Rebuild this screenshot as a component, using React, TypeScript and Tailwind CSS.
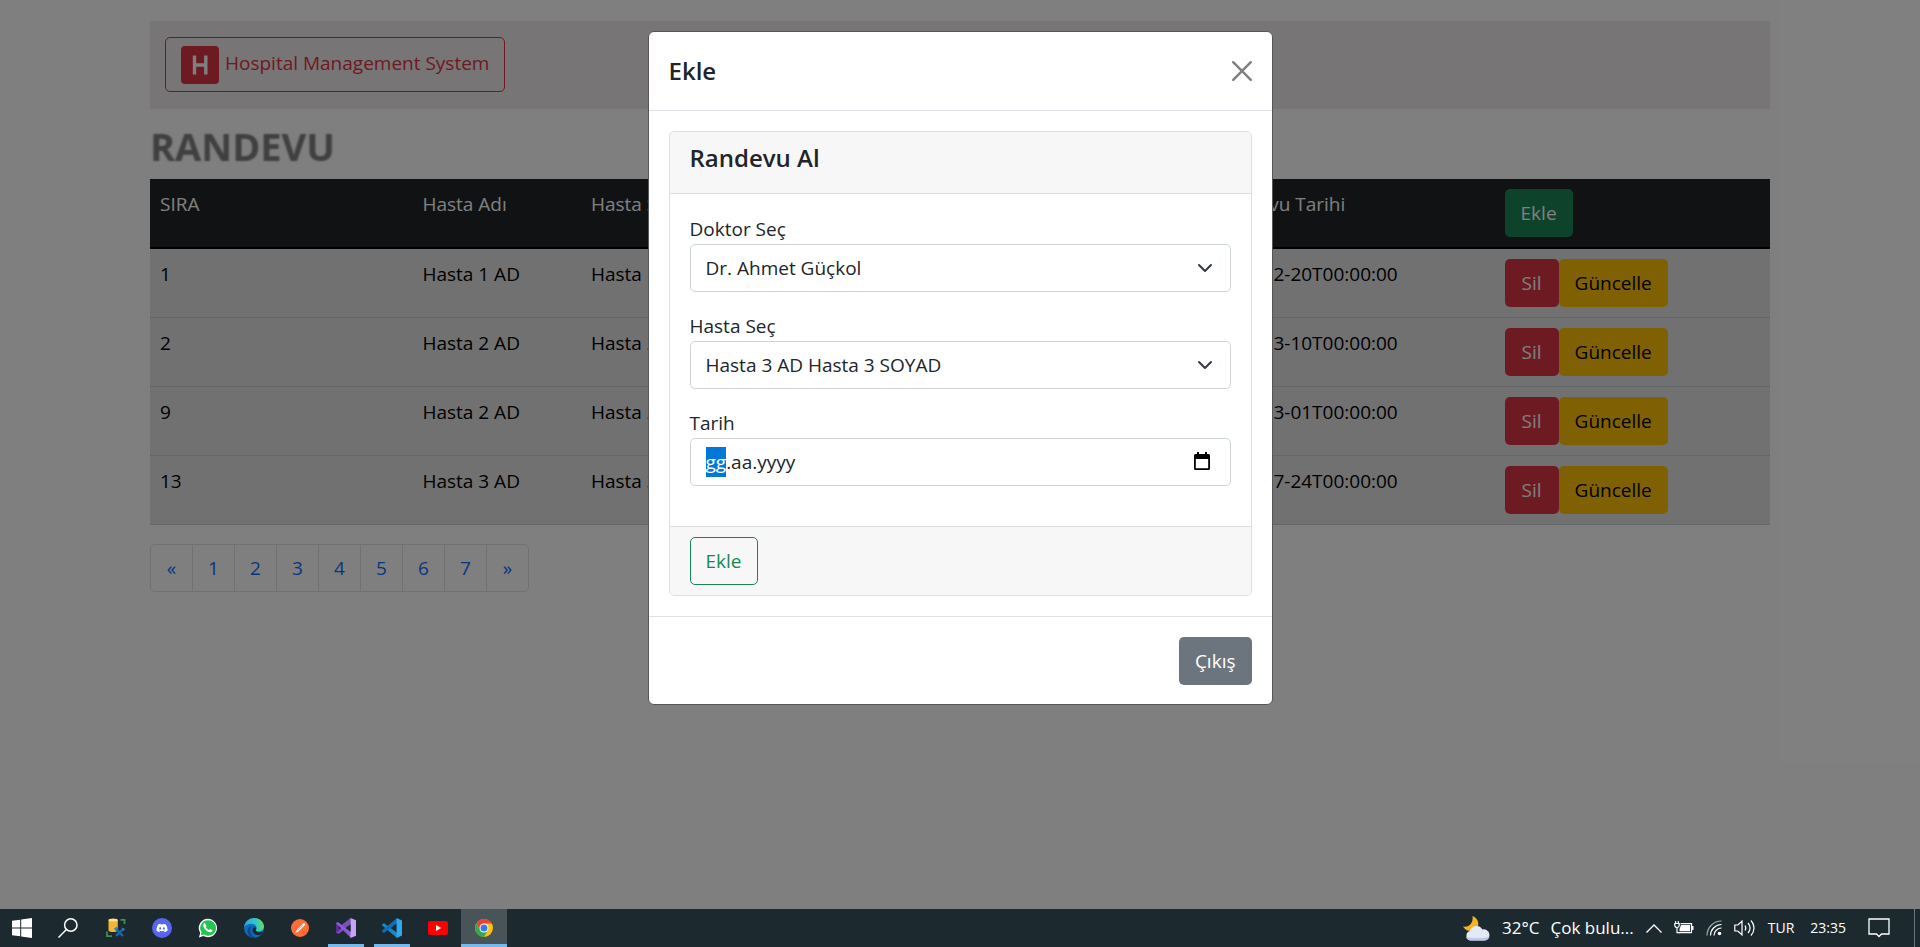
import { useEffect, useRef, useState } from "react";
import type { ReactNode } from "react";
import { FaDiscord } from "react-icons/fa";

type Appointment = { id: number; name: string; surname: string; doctor: string; date: string };

const appointments: Appointment[] = [
  { id: 1, name: "Hasta 1 AD", surname: "Hasta 1 SOYAD", doctor: "Dr. Ahmet Güçkol", date: "2022-02-20T00:00:00" },
  { id: 2, name: "Hasta 2 AD", surname: "Hasta 2 SOYAD", doctor: "Dr. Ahmet Güçkol", date: "2022-03-10T00:00:00" },
  { id: 9, name: "Hasta 2 AD", surname: "Hasta 2 SOYAD", doctor: "Dr. Ahmet Güçkol", date: "2022-03-01T00:00:00" },
  { id: 13, name: "Hasta 3 AD", surname: "Hasta 3 SOYAD", doctor: "Dr. Ahmet Güçkol", date: "2022-07-24T00:00:00" },
];

const pages = ["«", "1", "2", "3", "4", "5", "6", "7", "»"];

function Navbar() {
  return (
    <nav className="flex bg-[#f0eaec] px-[15px] pt-4 pb-[17px]">
      <a
        href="#"
        className="flex h-[55px] items-center gap-[6px] rounded-[5px] border border-[#dc3545] px-[15px] text-[#dc3545]"
      >
        <svg viewBox="0 0 38 38" className="size-[38px]" aria-hidden="true">
          <rect width="38" height="38" rx="4" fill="#dc3545" />
          <path d="M13.500 9.500v19M24.800 9.500v19M13.500 19h11.300" stroke="#fff" strokeWidth="3.400" fill="none" />
        </svg>
        <span className="-mt-1">Hospital Management System</span>
      </a>
    </nav>
  );
}

function AppointmentTable() {
  return (
    <table className="w-full table-fixed text-left">
      <colgroup>
        <col className="w-[16.2%]" />
        <col className="w-[10.4%]" />
        <col className="w-[14.6%]" />
        <col className="w-[23.8%]" />
        <col className="w-[18%]" />
        <col />
      </colgroup>
      <thead className="border-b-2 border-black bg-[#212529] text-white">
        <tr className="align-top">
          {["SIRA", "Hasta Adı", "Hasta Soyadı", "Doktor", "Randevu Tarihi"].map((title) => (
            <th key={title} className="p-[10px] font-normal">
              {title}
            </th>
          ))}
          <th className="p-[10px] font-normal">
            <button type="button" className="block h-12 rounded-[5px] bg-[#198754] px-4 text-white">
              Ekle
            </button>
          </th>
        </tr>
      </thead>
      <tbody className="bg-[#e2e3e5] text-black">
        {appointments.map((row) => (
          <tr key={row.id} className="border-b border-[#cbccce] align-top">
            <td className="p-[10px]">{row.id}</td>
            <td className="p-[10px]">{row.name}</td>
            <td className="p-[10px]">{row.surname}</td>
            <td className="p-[10px]">{row.doctor}</td>
            <td className="p-[10px]">{row.date}</td>
            <td className="p-[10px]">
              <div className="flex">
                <button type="button" className="h-12 rounded-[5px] bg-[#dc3545] px-[17px] text-white">
                  Sil
                </button>
                <button type="button" className="h-12 rounded-[5px] bg-[#ffc107] px-4 text-black">
                  Güncelle
                </button>
              </div>
            </td>
          </tr>
        ))}
      </tbody>
    </table>
  );
}

function Pagination() {
  return (
    <ul className="mt-[19px] flex w-fit overflow-hidden rounded-[5px] border border-[#dee2e6] bg-white">
      {pages.map((page, index) => (
        <li key={page} className={index > 0 ? "border-l border-[#dee2e6]" : ""}>
          <a href="#" className="flex h-[46px] w-[41px] items-center justify-center text-[#0d6efd]">
            {page}
          </a>
        </li>
      ))}
    </ul>
  );
}

function SelectField({ id, label, options }: { id: string; label: string; options: string[] }) {
  return (
    <div>
      <label htmlFor={id} className="block">
        {label}
      </label>
      <div className="relative">
        <select
          id={id}
          className="block h-12 w-full appearance-none rounded-[5px] border border-[#ced4da] bg-white px-[15px] outline-none"
        >
          {options.map((option) => (
            <option key={option}>{option}</option>
          ))}
        </select>
        <svg viewBox="0 0 16 16" className="pointer-events-none absolute top-4 right-[18px] size-4" aria-hidden="true">
          <path d="m2 5 6 6 6-6" fill="none" stroke="#343a40" strokeWidth="2" strokeLinecap="round" strokeLinejoin="round" />
        </svg>
      </div>
    </div>
  );
}

function DateField() {
  const ref = useRef<HTMLInputElement>(null);
  const [value, setValue] = useState("gg.aa.yyyy");

  useEffect(() => {
    ref.current?.focus({ preventScroll: true });
    ref.current?.setSelectionRange(0, 2);
  }, []);

  return (
    <div>
      <label htmlFor="date" className="block">
        Tarih
      </label>
      <div className="flex h-12 items-center rounded-[5px] border border-[#ced4da] bg-white px-[15px]">
        <input
          ref={ref}
          id="date"
          type="text"
          value={value}
          onChange={(event) => setValue(event.target.value)}
          className="min-w-0 flex-1 outline-none selection:bg-[#0078d7] selection:text-white"
        />
        <button type="button" aria-label="Takvim" className="mr-1">
          <svg viewBox="0 0 18 20" className="h-5 w-[18px]" aria-hidden="true">
            <path
              d="M4 0h2v2h6V0h2v2h1.500a1.500 1.500 0 0 1 1.500 1.500V16.500a1.500 1.500 0 0 1-1.500 1.500H2.500A1.500 1.500 0 0 1 1 16.500V3.500A1.500 1.500 0 0 1 2.500 2H4zM2.800 7v9.200h12.400V7z"
              fill="#000"
              fillRule="evenodd"
            />
          </svg>
        </button>
      </div>
    </div>
  );
}

function Modal() {
  return (
    <div
      role="dialog"
      aria-modal="true"
      aria-labelledby="modal-title"
      className="mx-auto mt-[31px] w-full max-w-[625px] rounded-[6px] border border-[#565656] bg-white text-[#212529]"
    >
      <header className="flex items-center justify-between border-b border-[#dee2e6] px-5 py-5">
        <h5 id="modal-title" className="text-2xl leading-[38px] font-semibold">
          Ekle
        </h5>
        <button type="button" aria-label="Kapat">
          <svg viewBox="0 0 20 20" className="size-5" aria-hidden="true">
            <path d="m1.200 1.200 17.600 17.600M18.800 1.200 1.200 18.800" stroke="#7f7f7f" strokeWidth="2.400" strokeLinecap="round" />
          </svg>
        </button>
      </header>

      <div className="p-5">
        <section className="overflow-hidden rounded-[5px] border border-[#dfdfdf]">
          <div className="border-b border-[#dfdfdf] bg-[#f7f7f7] px-5 pt-[10px] pb-5">
            <h5 className="text-2xl leading-[31px] font-semibold">Randevu Al</h5>
          </div>
          <div className="flex flex-col gap-[19px] px-5 pt-5 pb-10">
            <SelectField id="doctor" label="Doktor Seç" options={["Dr. Ahmet Güçkol"]} />
            <SelectField id="patient" label="Hasta Seç" options={["Hasta 3 AD Hasta 3 SOYAD"]} />
            <DateField />
          </div>
          <div className="border-t border-[#dfdfdf] bg-[#f7f7f7] px-5 py-[10px]">
            <button type="button" className="block h-12 rounded-[5px] border border-[#198754] px-[15px] text-[#198754]">
              Ekle
            </button>
          </div>
        </section>
      </div>

      <footer className="flex justify-end border-t border-[#dee2e6] p-5 pb-[19px]">
        <button type="button" className="h-12 rounded-[5px] bg-[#6c757d] px-4 text-white">
          Çıkış
        </button>
      </footer>
    </div>
  );
}

function WindowsIcon() {
  return (
    <svg viewBox="0 0 20 20" className="size-5" fill="#fff" aria-hidden="true">
      <path d="M0 2.800 8.200 1.700v7.800H0zM9.200 1.500 20 0v9.500H9.200zM0 10.500h8.200v7.800L0 17.200zM9.200 10.500H20V20L9.200 18.500z" />
    </svg>
  );
}

function SearchIcon() {
  return (
    <svg viewBox="0 0 20 20" className="size-5" fill="none" stroke="#fff" strokeWidth="1.500" aria-hidden="true">
      <circle cx="12.800" cy="7" r="6.200" />
      <path d="M8.400 11.400.5 19.500" />
    </svg>
  );
}

function SqlStudioIcon() {
  return (
    <svg viewBox="0 0 20 20" className="size-5" aria-hidden="true">
      <path d="M2.500 1.800v10.400c0 1 2 1.800 4.600 1.800s4.700-.8 4.700-1.800V1.800z" fill="#f2b632" />
      <ellipse cx="7.150" cy="2" rx="4.650" ry="1.600" fill="#ffe08a" />
      <path d="M14.500 1.800h4V6M1 13.500v4.700h5" fill="none" stroke="#3f8f4f" strokeWidth="1.800" />
      <path d="m9.500 10.500 7.500 7.500M17.500 10.500l-7.500 7.500" stroke="#1769aa" strokeWidth="2.200" />
      <path d="m8 10.500 3-2 1 2.500-2.500 1.500zM15.500 9.500l3.500 1.500-1.500 2z" fill="#2b83c6" />
    </svg>
  );
}

function DiscordIcon() {
  return (
    <span className="flex size-5 items-center justify-center rounded-full bg-[#5865f2]">
      <FaDiscord className="size-3 text-white" />
    </span>
  );
}

function WhatsAppIcon() {
  return (
    <svg viewBox="0 0 20 20" className="size-5" aria-hidden="true">
      <path d="M10 .8A9.200 9.200 0 0 0 2.200 14.900L.9 19.400l4.600-1.300A9.200 9.200 0 1 0 10 .8z" fill="#fff" />
      <path d="M10 2.200a7.800 7.800 0 0 0-6.500 12.100l-.7 3 3.100-.8A7.800 7.800 0 1 0 10 2.200z" fill="#25c351" />
      <path
        d="M7.200 5.600c-.4-.8-1.700 0-1.900 1.200-.5 3.200 4.200 7.700 7.200 7.400 1.300-.1 2.500-1.300 1.900-2l-1.900-1.100c-.6-.2-1 1-1.600.9-1.300-.5-2.600-1.800-3.100-3 0-.5.9-.9.500-1.600z"
        fill="#fff"
      />
    </svg>
  );
}

function EdgeIcon() {
  return (
    <svg viewBox="0 0 20 20" className="size-5" aria-hidden="true">
      <defs>
        <linearGradient id="edge-top" x1="0" y1="0.500" x2="1" y2="0.400">
          <stop offset="0" stopColor="#2aa7e8" />
          <stop offset="0.600" stopColor="#35c6c4" />
          <stop offset="1" stopColor="#6ddc5a" />
        </linearGradient>
      </defs>
      <circle cx="10" cy="10" r="10" fill="#0f6cbd" />
      <path d="M.1 9C.8 3.800 5 0 10.200 0 16 0 20 4.400 20 8.600c0 3-2.300 4.800-5 4.800-2 0-3.300-.8-3.300-1.500 0-.6.800-.9.800-2.300 0-2-2-3.900-5-3.900C3.800 5.700 1 7.600.1 9z" fill="url(#edge-top)" />
      <path d="M7.500 8.600c-2.700 3.700-.4 9.200 4.600 11.200-4.800 1-7.900-2-8.500-5.400C3 10.800 5.300 8 7.500 8.600z" fill="#0c4a94" />
      <path d="M11.700 11.900c0 1.200 1.700 2.400 4 2.400 1.500 0 2.600-.4 3.400-1l-1.600 2.900c-3.600 1.900-8 .5-9-2.700-.4-1.800.2-3.400 1.400-4.200 1.300-.3 2.400.5 2.500 1.200z" fill="#1c2a30" />
    </svg>
  );
}

function PostmanIcon() {
  return (
    <svg viewBox="0 0 20 20" className="size-5" aria-hidden="true">
      <circle cx="10" cy="10" r="9" fill="#ff6c37" />
      <path d="M5 15.200 6.800 12l6.400-6.500c1.200-1 2.700.3 1.800 1.600L8.600 13.300z" fill="#fff" />
      <path d="M7.600 12.400 13 7" stroke="#ff6c37" strokeWidth="0.600" />
    </svg>
  );
}

function VisualStudioIcon() {
  return (
    <svg viewBox="0 0 20 20" className="size-5" aria-hidden="true">
      <path d="M0 5.200 2 4l3.500 3L14.500 0v6.200L3 15.800l-3-1z" fill="#7b4bc0" />
      <path d="M0 14.800V5.200l3.200 2.600v4.600z" fill="#5c2d91" />
      <path d="m0 5.200 2-1 13 9.800v6z" fill="#8a5bd6" />
      <path d="m14.500 0 5.500 2.300v15.400L14.500 20z" fill="#c9a3f7" />
      <path d="m3 8.200 2 1.800-2 2zM14.500 6.500v7L9.700 10z" fill="#1c2a30" />
    </svg>
  );
}

function VsCodeIcon() {
  return (
    <svg viewBox="0 0 20 20" className="size-5" aria-hidden="true">
      <path d="m0 6.800 1.800-1.700 13.200 9.700V20L.2 7.500z" fill="#1788cf" />
      <path d="m0 13.200 1.800 1.700L15 5.200V0L.2 12.500z" fill="#0f6fb5" />
      <path d="m14.600 0 5.400 2.400v15.200L14.600 20z" fill="#30a8ee" />
    </svg>
  );
}

function YoutubeIcon() {
  return (
    <svg viewBox="0 0 20 14" className="h-[14px] w-5" aria-hidden="true">
      <rect width="20" height="14" rx="2.500" fill="#f00" />
      <path d="m8 4 5.200 3L8 10z" fill="#fff" />
    </svg>
  );
}

function ChromeIcon() {
  return (
    <svg viewBox="0 0 20 20" className="size-[18px]" aria-hidden="true">
      <circle cx="10" cy="10" r="10" fill="#fbc116" />
      <path d="M1.340 5A10 10 0 0 1 18.660 5H10L5.670 12.500z" fill="#ea4335" />
      <path d="M1.340 5A10 10 0 0 0 10 20l4.330-7.500H5.670z" fill="#34a853" />
      <circle cx="10" cy="10" r="5" fill="#fff" />
      <circle cx="10" cy="10" r="3.900" fill="#3b78e7" />
    </svg>
  );
}

const pinned: { name: string; icon: ReactNode; open?: boolean; active?: boolean }[] = [
  { name: "SQL Server", icon: <SqlStudioIcon /> },
  { name: "Discord", icon: <DiscordIcon /> },
  { name: "WhatsApp", icon: <WhatsAppIcon /> },
  { name: "Edge", icon: <EdgeIcon /> },
  { name: "Postman", icon: <PostmanIcon /> },
  { name: "Visual Studio", icon: <VisualStudioIcon />, open: true },
  { name: "Visual Studio Code", icon: <VsCodeIcon />, open: true },
  { name: "YouTube", icon: <YoutubeIcon /> },
  { name: "Chrome", icon: <ChromeIcon />, active: true },
];

function underline(open?: boolean, active?: boolean) {
  if (active) return "h-[3px] w-full bg-[#76b9ed]";
  if (open) return "h-[3px] w-9 bg-[#76b9ed]";
  return "h-[3px] w-9";
}

function Taskbar() {
  return (
    <footer className="flex h-[38px] items-stretch justify-between bg-[#1c2a30] font-['Open_Sans','Noto_Sans',sans-serif] text-white">
      <div className="flex">
        <button type="button" aria-label="Başlat" className="flex w-11 items-center justify-center">
          <WindowsIcon />
        </button>
        <button type="button" aria-label="Ara" className="mr-[2px] flex w-[47px] items-center justify-center">
          <SearchIcon />
        </button>
        {pinned.map((app) => (
          <button
            key={app.name}
            type="button"
            aria-label={app.name}
            className={
              app.active
                ? "flex w-[46px] flex-col items-center bg-[#485458]"
                : "flex w-[46px] flex-col items-center"
            }
          >
            <span className="flex flex-1 items-center pt-[3px]">{app.icon}</span>
            <span className={underline(app.open, app.active)} />
          </button>
        ))}
      </div>

      <div className="flex items-center gap-3">
        <button type="button" className="flex items-center gap-3 text-[17px]">
          <svg viewBox="0 0 27 25" className="h-[25px] w-[27px]" aria-hidden="true">
            <path d="M9.500 0c6 2.500 7.500 8.500 4 12.500C10 16.500 3 16 0 10.500c6 1 10.500-3 9.500-10.500z" fill="#f9b01e" />
            <path d="M7.500 24.500a5 5 0 0 1-.8-9.600 7 7 0 0 1 12.700-1.400 5.600 5.600 0 1 1 1.800 11z" fill="#e3e9f7" />
            <path d="M3 20.500c4 2 18 2 23.500 0a5.500 5.500 0 0 1-5.200 4H7.500a5 5 0 0 1-4.500-4z" fill="#bccaea" />
          </svg>
          <span>32°C</span>
          <span className="-ml-px">Çok bulu...</span>
        </button>
        <svg viewBox="0 0 16 9" className="h-[9px] w-4" fill="none" stroke="#fff" strokeWidth="1.300" aria-hidden="true">
          <path d="m.5 8.500 7.500-7.500 7.500 7.500" />
        </svg>
        <svg viewBox="0 0 20 14" className="h-[14px] w-5" aria-hidden="true">
          <path d="M6.500 2.600h11v9H5" fill="none" stroke="#fff" strokeWidth="1.200" />
          <path d="M7 4h9v6.200H5.500V8zM18 5h1.500v4H18z" fill="#fff" />
          <path d="M1.700 0v2.500M4.300 0v2.500" stroke="#fff" strokeWidth="1.100" />
          <path d="M.8 2.500h4.400v1.800a2.200 2.200 0 0 1-4.400 0zM3 6.500v5.100h3" fill="none" stroke="#fff" strokeWidth="1.200" />
        </svg>
        <svg viewBox="0 0 16 16" className="size-4" fill="none" aria-hidden="true">
          <path d="M1 15.500C1 7.500 7.500 1 15.500 1" stroke="#a4abae" strokeWidth="1.200" />
          <path d="M4.500 15.500c0-6 5-11 11-11M8 15.500C8 11.400 11.400 8 15.500 8" stroke="#fff" strokeWidth="1.200" />
          <circle cx="13.500" cy="13.500" r="1.800" fill="#fff" />
        </svg>
        <svg viewBox="0 0 21 18" className="h-[18px] w-[21px]" fill="none" stroke="#fff" strokeWidth="1.200" aria-hidden="true">
          <path d="M.8 6v6h3L8 15.800V2.200L3.800 6zM11 6.500c1 1.500 1 3.500 0 5M14 4c2.500 3 2.500 7 0 10M17 1.500c4 4.500 4 10.500 0 15" />
        </svg>
        <span className="ml-px text-sm">TUR</span>
        <span className="ml-1 text-sm">23:35</span>
        <button type="button" aria-label="Bildirimler" className="ml-[10px] flex">
          <svg viewBox="0 0 22 20" className="h-5 w-[22px]" fill="none" stroke="#fff" strokeWidth="1.300" aria-hidden="true">
            <path d="M1 1h20v15h-7.500L11 18.500 8.500 16H1z" />
          </svg>
        </button>
        <div className="ml-3 flex h-[38px] w-[6px] border-l border-[#6d777b]" />
      </div>
    </footer>
  );
}

export default function App() {
  return (
    <div className="flex min-h-screen flex-col bg-white font-['Open_Sans','Noto_Sans',sans-serif] text-[19px] leading-[30px] text-[#212529]">
      <main className="relative flex-1">
        <div className="mx-auto max-w-[1620px] pt-[21px]">
          <Navbar />
          <h2 className="mt-[13px] mb-[9px] text-[38px] leading-[48px] font-bold text-transparent [text-shadow:0_0_2px_rgba(0,0,0,0.5)]">
            RANDEVU
          </h2>
          <AppointmentTable />
          <Pagination />
        </div>
        <div className="absolute inset-0 bg-black/50">
          <Modal />
        </div>
      </main>
      <Taskbar />
    </div>
  );
}
